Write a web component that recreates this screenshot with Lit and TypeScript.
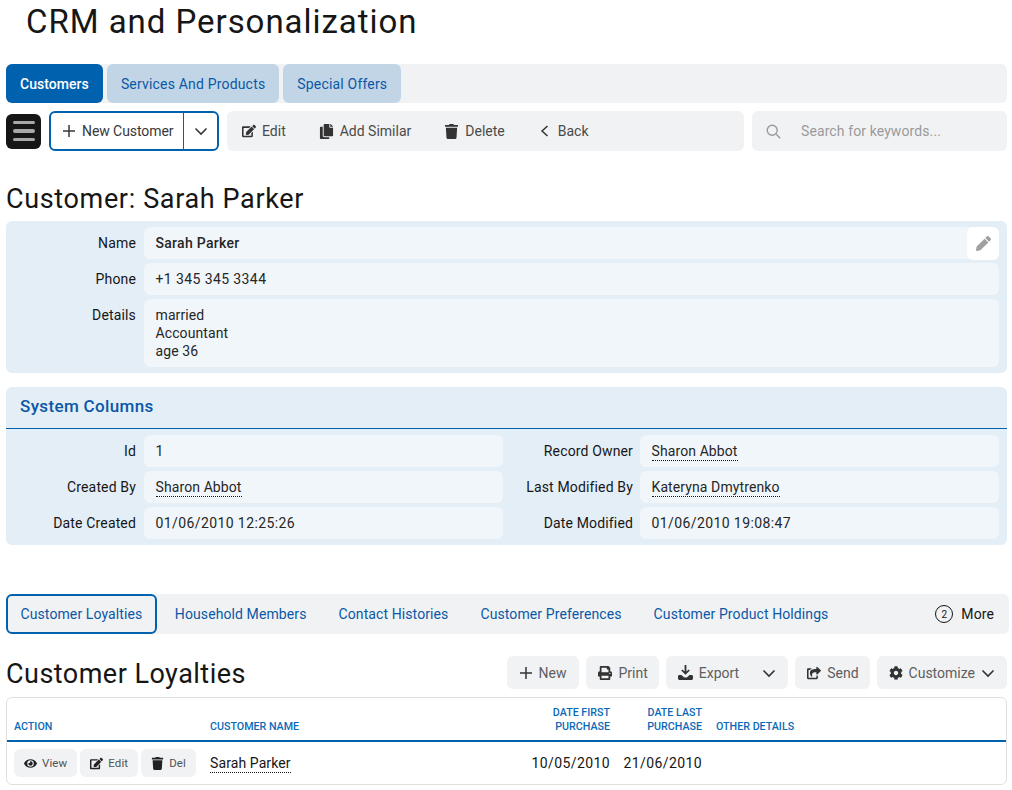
import { css, html, LitElement, svg } from 'lit';
import { customElement } from 'lit/decorators.js';

const ICONS = {
  edit: [576, 'M402.6 83.2l90.2 90.2c3.8 3.8 3.8 10 0 13.8L274.4 405.6l-92.8 10.3c-12.4 1.4-22.9-9.1-21.5-21.5l10.3-92.8L388.8 83.2c3.8-3.8 10-3.8 13.8 0zm162-22.9l-48.8-48.8c-15.2-15.2-39.9-15.2-55.2 0l-35.4 35.4c-3.8 3.8-3.8 10 0 13.8l90.2 90.2c3.8 3.8 10 3.8 13.8 0l35.4-35.4c15.2-15.3 15.2-40 0-55.2zM384 346.2V448H64V128h229.8c3.2 0 6.2-1.3 8.5-3.5l40-40c7.6-7.6 2.2-20.5-8.5-20.5H48C21.5 64 0 85.5 0 112v352c0 26.5 21.5 48 48 48h352c26.5 0 48-21.5 48-48V306.2c0-10.7-12.9-16-20.5-8.5l-40 40c-2.2 2.3-3.5 5.3-3.5 8.5z'],
  copy: [448, 'M320 448v40c0 13.255-10.745 24-24 24H24c-13.255 0-24-10.745-24-24V120c0-13.255 10.745-24 24-24h72v296c0 30.879 25.121 56 56 56h168zm0-344V0H152c-13.255 0-24 10.745-24 24v368c0 13.255 10.745 24 24 24h272c13.255 0 24-10.745 24-24V128H344c-13.2 0-24-10.8-24-24zm120.971-31.029L375.029 7.029A24 24 0 0 0 358.059 0H352v96h96v-6.059a24 24 0 0 0-7.029-16.97z'],
  trash: [448, 'M432 32H312l-9.4-18.7A24 24 0 0 0 281.1 0H166.8a23.72 23.72 0 0 0-21.4 13.3L136 32H16A16 16 0 0 0 0 48v32a16 16 0 0 0 16 16h416a16 16 0 0 0 16-16V48a16 16 0 0 0-16-16zM53.2 467a48 48 0 0 0 47.9 45h245.8a48 48 0 0 0 47.9-45L416 128H32z'],
  eye: [576, 'M572.52 241.4C518.29 135.59 410.93 64 288 64S57.68 135.64 3.48 241.41a32.35 32.35 0 0 0 0 29.19C57.71 376.41 165.07 448 288 448s230.32-71.64 284.52-177.41a32.35 32.35 0 0 0 0-29.19zM288 400a144 144 0 1 1 144-144 143.93 143.93 0 0 1-144 144zm0-240a95.31 95.31 0 0 0-25.31 3.79 47.85 47.85 0 0 1-66.9 66.9A95.78 95.78 0 1 0 288 160z'],
  print: [512, 'M448 192V77.25c0-8.49-3.37-16.62-9.37-22.63L393.37 9.37c-6-6-14.14-9.37-22.63-9.37H96C78.33 0 64 14.33 64 32v160c-35.35 0-64 28.65-64 64v112c0 8.84 7.16 16 16 16h48v96c0 17.67 14.33 32 32 32h320c17.67 0 32-14.33 32-32v-96h48c8.84 0 16-7.16 16-16V256c0-35.35-28.65-64-64-64zm-64 256H128v-96h256v96zm0-224H128V64h192v48c0 8.84 7.16 16 16 16h48v96zm48 72c-13.25 0-24-10.75-24-24 0-13.26 10.75-24 24-24s24 10.74 24 24c0 13.25-10.75 24-24 24z'],
  send: [576, 'M568.482 177.448L424.479 313.433C409.3 327.768 384 317.14 384 295.985v-71.963c-144.575.97-205.566 35.113-164.775 171.353 4.483 14.973-12.846 26.567-25.006 17.33C155.252 383.105 120 326.488 120 269.339c0-143.937 117.599-172.5 264-173.312V24.012c0-21.174 25.317-31.768 40.479-17.448l144.003 135.988c10.02 9.463 10.028 25.425 0 34.896zM384 379.128V448H64V128h50.916a11.99 11.99 0 0 0 8.648-3.693c14.953-15.568 32.237-27.89 51.014-37.676C185.708 80.83 181.584 64 169.033 64H48C21.49 64 0 85.49 0 112v352c0 26.51 21.49 48 48 48h352c26.51 0 48-21.49 48-48v-88.806c0-8.288-8.197-14.066-16.011-11.302a71.83 71.83 0 0 1-34.189 3.377c-7.27-1.046-13.8 4.514-13.8 11.859z'],
  cog: [512, 'M487.4 315.7l-42.6-24.6c4.3-23.2 4.3-47 0-70.2l42.6-24.6c4.9-2.8 7.1-8.6 5.5-14-11.1-35.6-30-67.8-54.7-94.6-3.8-4.1-10-5.1-14.8-2.3L380.8 110c-17.9-15.4-38.5-27.3-60.8-35.1V25.8c0-5.6-3.9-10.5-9.4-11.7-36.7-8.2-74.3-7.8-109.2 0-5.5 1.2-9.4 6.1-9.4 11.7V75c-22.2 7.9-42.8 19.8-60.8 35.1L88.7 85.5c-4.9-2.8-11-1.9-14.8 2.3-24.7 26.7-43.6 58.9-54.7 94.6-1.7 5.4.6 11.2 5.5 14L67.3 221c-4.3 23.2-4.3 47 0 70.2l-42.6 24.6c-4.9 2.8-7.1 8.6-5.5 14 11.1 35.6 30 67.8 54.7 94.6 3.8 4.1 10 5.1 14.8 2.3l42.6-24.6c17.9 15.4 38.5 27.3 60.8 35.1v49.2c0 5.6 3.9 10.5 9.4 11.7 36.7 8.2 74.3 7.8 109.2 0 5.5-1.2 9.4-6.1 9.4-11.7v-49.2c22.2-7.9 42.8-19.8 60.8-35.1l42.6 24.6c4.9 2.8 11 1.9 14.8-2.3 24.7-26.7 43.6-58.9 54.7-94.6 1.5-5.5-.7-11.3-5.6-14.1zM256 336c-44.1 0-80-35.9-80-80s35.9-80 80-80 80 35.9 80 80-35.9 80-80 80z'],
  pen: [512, 'M497.9 142.1l-46.1 46.1c-4.7 4.7-12.3 4.7-17 0l-111-111c-4.7-4.7-4.7-12.3 0-17l46.1-46.1c18.7-18.7 49.1-18.7 67.9 0l60.1 60.1c18.8 18.7 18.8 49.1 0 67.9zM284.2 99.8L21.6 362.4.4 483.9c-2.9 16.4 11.4 30.6 27.8 27.8l121.5-21.3 262.6-262.6c4.7-4.7 4.7-12.3 0-17l-111-111c-4.8-4.7-12.4-4.7-17.1 0z'],
} as const;

const icon = (name: keyof typeof ICONS, size = 14) => {
  const [w, d] = ICONS[name];
  return html`<svg class="ico" width=${size} height=${size} viewBox="0 0 ${w} 512" fill="currentColor">${svg`<path d=${d}></path>`}</svg>`;
};

const plus = html`<svg class="ico" width="14" height="14" viewBox="0 0 14 14" fill="none" stroke="currentColor" stroke-width="1.5"><path d="M7 1v12M1 7h12"></path></svg>`;
const chevron = html`<svg class="ico" width="14" height="14" viewBox="0 0 14 14" fill="none" stroke="currentColor" stroke-width="1.6"><path d="M1.5 4.5L7 10l5.5-5.5"></path></svg>`;
const back = html`<svg class="ico" width="14" height="14" viewBox="0 0 14 14" fill="none" stroke="currentColor" stroke-width="1.5"><path d="M9.5 2L4 7l5.5 5"></path></svg>`;
const search = html`<svg class="ico" width="15" height="15" viewBox="0 0 15 15" fill="none" stroke="currentColor" stroke-width="1.4"><circle cx="6.2" cy="6.2" r="5"></circle><path d="M10 10l4.2 4.2"></path></svg>`;
const exportIcon = html`<svg class="ico" width="15" height="15" viewBox="0 0 15 15" fill="currentColor"><path d="M6.6 0h1.8v6.6l2.3-2.2 1.1 1.1-4.3 4.2-4.3-4.2 1.1-1.1 2.3 2.2z"></path><path d="M0 11.3c0-.8.6-1.4 1.4-1.4h2l2.2 2c1 .9 2.8.9 3.8 0l2.2-2h2c.8 0 1.4.6 1.4 1.4v2.3c0 .8-.6 1.4-1.4 1.4H1.4C.6 15 0 14.4 0 13.6z"></path></svg>`;

@customElement('app-root')
export class AppRoot extends LitElement {
  static override styles = css`
    :host {
      display: block;
      font-family: Roboto, 'Liberation Sans', sans-serif;
      font-size: 14px;
      color: #161616;
      letter-spacing: 0.1px;
    }
    .ico { flex: none; display: block; }
    .page { padding: 0 5px 0 6px; }
    h1 {
      margin: 0;
      padding: 3px 0 0 20px;
      height: 64px;
      box-sizing: border-box;
      font-size: 33px;
      line-height: 38px;
      font-weight: 400;
      letter-spacing: 0.96px;
    }
    .tabs {
      display: flex;
      gap: 4px;
      background: #f1f2f4;
      border-radius: 6px;
      height: 39px;
    }
    .tabs a {
      display: flex;
      align-items: center;
      padding: 0 14px;
      border-radius: 6px;
      background: #c1d5e6;
      color: #0a58a5;
      letter-spacing: 0.18px;
    }
    .tabs a.active { background: #0061ae; color: #fff; font-weight: 500; letter-spacing: 0.05px; }
    .tools {
      display: flex;
      align-items: center;
      gap: 8px;
      margin-top: 8px;
      height: 40px;
    }
    .burger {
      width: 35px;
      height: 35px;
      border-radius: 6px;
      background: #161616;
      display: flex;
      flex-direction: column;
      justify-content: center;
      align-items: center;
      gap: 5px;
    }
    .burger i { width: 22px; height: 3.5px; border-radius: 2px; background: #a8a8a8; }
    .split {
      display: flex;
      width: 170px;
      height: 40px;
      box-sizing: border-box;
      border: 2px solid #0061ae;
      border-radius: 6px;
    }
    .split .main {
      display: flex;
      align-items: center;
      gap: 6px;
      width: 133px;
      box-sizing: border-box;
      padding-left: 11px;
      border-right: 1px solid #0061ae;
      color: #393939;
      letter-spacing: -0.07px;
    }
    .split .drop { flex: 1; display: flex; align-items: center; justify-content: center; color: #393939; }
    .bar {
      width: 517px;
      height: 40px;
      box-sizing: border-box;
      display: flex;
      align-items: center;
      padding-left: 15px;
      background: #f1f2f4;
      border-radius: 6px;
      color: #4a4a4a;
      letter-spacing: 0;
    }
    .bar span { display: flex; align-items: center; gap: 6px; margin-right: 33px; }
    .bar svg { color: #333; }
    .search {
      flex: 1;
      height: 40px;
      display: flex;
      align-items: center;
      gap: 20px;
      padding-left: 14px;
      background: #f1f2f4;
      border-radius: 6px;
      color: #9a9a9a;
    }
    h2 {
      margin: 0;
      font-weight: 400;
      font-size: 27px;
      line-height: 34px;
      letter-spacing: 0.64px;
      padding-top: 31px;
      height: 70px;
      box-sizing: border-box;
    }
    .card { background: #e4eef7; border-radius: 6px; }
    .rows { display: flex; flex-direction: column; gap: 4px; padding: 6px 8px 6px 0; position: relative; }
    .row { display: grid; grid-template-columns: 130px 1fr; column-gap: 8px; }
    .row label { text-align: right; padding-top: 7px; line-height: 18px; color: #161616; letter-spacing: 0.15px; }
    .val {
      background: #f1f6fb;
      border-radius: 6px;
      min-height: 32px;
      padding: 7px 11.5px;
      box-sizing: border-box;
      line-height: 18px;
      color: #262626;
    }
    .val b { font-weight: 500; letter-spacing: 0.3px; }
    .num { letter-spacing: 0.4px; }
    .link { border-bottom: 1px dotted #161616; padding-bottom: 1px; }
    .pen {
      position: absolute;
      right: 8px;
      top: 6px;
      width: 32px;
      height: 33px;
      background: #fff;
      border-radius: 6px;
      display: flex;
      align-items: center;
      justify-content: center;
      color: #a0a0a0;
    }
    .sys { margin-top: 14px; }
    .sys h3 {
      margin: 0;
      height: 42px;
      box-sizing: border-box;
      padding: 0 0 4px 14px;
      display: flex;
      align-items: center;
      font-size: 17px;
      font-weight: 500;
      letter-spacing: 0.35px;
      color: #0a58a5;
      border-bottom: 1px solid #0061ae;
    }
    .cols { display: grid; grid-template-columns: 497px 496px; row-gap: 4px; padding: 6px 8px 6px 0; }
    .cols .row.right { column-gap: 7px; }
    .tabs2 {
      display: flex;
      align-items: center;
      height: 40px;
      margin: 49px -2px 0 0;
      background: #f1f2f4;
      border-radius: 6px;
      color: #0a58a5;
      letter-spacing: 0.1px;
    }
    .tabs2 a { padding: 0 16px; flex: none; }
    .tabs2 a.active {
      height: 40px;
      box-sizing: border-box;
      display: flex;
      align-items: center;
      padding: 0 12.5px;
      border: 2px solid #0061ae;
      border-radius: 6px;
      margin-right: 2px;
    }
    .more { margin-left: auto; display: flex; align-items: center; gap: 8px; padding-right: 15px; color: #161616; }
    .more i {
      width: 18px;
      height: 18px;
      box-sizing: border-box;
      border: 1px solid #161616;
      border-radius: 50%;
      font-style: normal;
      font-size: 10px;
      letter-spacing: 0;
      display: flex;
      align-items: center;
      justify-content: center;
    }
    .head { display: flex; align-items: center; height: 63px; justify-content: space-between; }
    .head h2 { padding: 0; height: auto; letter-spacing: 0.47px; margin-top: 16px; }
    .btns { display: flex; gap: 7px; margin-top: 14px; }
    .btn {
      height: 33px;
      box-sizing: border-box;
      display: flex;
      align-items: center;
      gap: 6px;
      padding: 0 12px;
      background: #f1f2f4;
      border-radius: 6px;
      color: #5e5e5e;
      letter-spacing: 0;
    }
    .btn.tight { padding-right: 11px; }
    .btn.wide { padding-right: 13px; }
    .btn svg { color: #333; }
    .btn .caret { margin-left: 17px; display: flex; }
    .table {
      border: 1px solid #e0e0e0;
      border-radius: 6px;
      height: 88px;
      box-sizing: border-box;
    }
    .grid { display: grid; grid-template-columns: 196px 300px 107px 92px 1fr; }
    .th {
      height: 44px;
      box-sizing: border-box;
      border-bottom: 2px solid #0061ae;
      color: #0b6ab8;
      font-size: 10.7px;
      line-height: 14px;
      font-weight: 500;
      letter-spacing: 0;
      padding-bottom: 6px;
    }
    .th > div { align-self: end; }
    .r { text-align: right; }
    .pad { padding-left: 7px; }
    .th .o { padding-left: 14px; }
    .tr { align-items: center; padding-top: 7px; }
    .tr .r { letter-spacing: 0.4px; }
    .acts { display: flex; gap: 3px; padding-left: 7px; }
    .act {
      height: 28px;
      box-sizing: border-box;
      display: flex;
      align-items: center;
      gap: 5px;
      padding: 0 10px;
      background: #f1f2f4;
      border-radius: 6px;
      font-size: 11.5px;
      color: #525252;
    }
    .act svg { color: #222; }
  `;

  private field(name: string, value: unknown, cls = '') {
    return html`<div class="row ${cls}"><label>${name}</label><div class="val">${value}</div></div>`;
  }

  override render() {
    return html`
      <div class="page">
        <h1>CRM and Personalization</h1>
        <nav class="tabs">
          <a class="active">Customers</a>
          <a>Services And Products</a>
          <a>Special Offers</a>
        </nav>
        <div class="tools">
          <div class="burger"><i></i><i></i><i></i></div>
          <div class="split">
            <div class="main">${plus} New Customer</div>
            <div class="drop">${chevron}</div>
          </div>
          <div class="bar">
            <span>${icon('edit')} Edit</span>
            <span>${icon('copy', 15)} Add Similar</span>
            <span>${icon('trash', 15)} Delete</span>
            <span>${back} Back</span>
          </div>
          <div class="search">${search} Search for keywords...</div>
        </div>
        <h2>Customer: Sarah Parker</h2>
        <section class="card rows">
          ${this.field('Name', html`<b>Sarah Parker</b>`)}
          ${this.field('Phone', html`<span class="num">+1 345 345 3344</span>`)}
          ${this.field('Details', html`married<br />Accountant<br />age 36`)}
          <div class="pen">${icon('pen', 15)}</div>
        </section>
        <section class="card sys">
          <h3>System Columns</h3>
          <div class="cols">
            ${this.field('Id', '1')}
            ${this.field('Record Owner', html`<span class="link">Sharon Abbot</span>`, 'right')}
            ${this.field('Created By', html`<span class="link">Sharon Abbot</span>`)}
            ${this.field('Last Modified By', html`<span class="link">Kateryna Dmytrenko</span>`, 'right')}
            ${this.field('Date Created', html`<span class="num">01/06/2010 12:25:26</span>`)}
            ${this.field('Date Modified', html`<span class="num">01/06/2010 19:08:47</span>`, 'right')}
          </div>
        </section>
        <nav class="tabs2">
          <a class="active">Customer Loyalties</a>
          <a>Household Members</a>
          <a>Contact Histories</a>
          <a>Customer Preferences</a>
          <a>Customer Product Holdings</a>
          <div class="more"><i>2</i> More</div>
        </nav>
        <div class="head">
          <h2>Customer Loyalties</h2>
          <div class="btns">
            <div class="btn wide">${plus} New</div>
            <div class="btn tight">${icon('print')} Print</div>
            <div class="btn">${exportIcon} Export <span class="caret">${chevron}</span></div>
            <div class="btn tight">${icon('send')} Send</div>
            <div class="btn">${icon('cog')} Customize ${chevron}</div>
          </div>
        </div>
        <div class="table">
          <div class="grid th">
            <div class="pad">ACTION</div>
            <div class="pad">CUSTOMER NAME</div>
            <div class="r">DATE FIRST<br />PURCHASE</div>
            <div class="r">DATE LAST<br />PURCHASE</div>
            <div class="o">OTHER DETAILS</div>
          </div>
          <div class="grid tr">
            <div class="acts">
              <div class="act">${icon('eye', 13)} View</div>
              <div class="act">${icon('edit', 13)} Edit</div>
              <div class="act">${icon('trash', 13)} Del</div>
            </div>
            <div class="pad"><span class="link">Sarah Parker</span></div>
            <div class="r">10/05/2010</div>
            <div class="r">21/06/2010</div>
            <div></div>
          </div>
        </div>
      </div>
    `;
  }
}
